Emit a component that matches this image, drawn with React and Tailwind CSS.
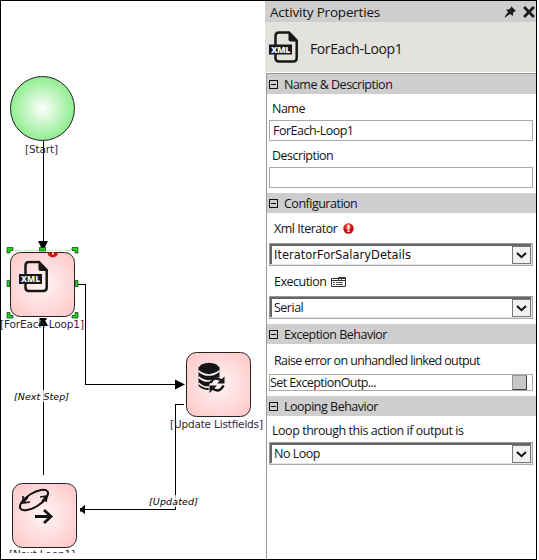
function XmlIcon({ className }) {
  return (
    <svg className={className} viewBox="0 0 30 33">
      <path d="M10 1.500H20L27.700 9.500V27Q27.700 30.500 24.200 30.500H10Q6.500 30.500 6.500 27V5Q6.500 1.500 10 1.500Z" fill="none" stroke="#171717" strokeWidth="2.500" />
      <path d="M19.500 1L28.500 10.500H21.500Q19.500 10.500 19.500 8.500Z" fill="#171717" />
      <rect x="0" y="13.500" width="23" height="10" fill="#171717" />
      <text x="11.500" y="21.800" textAnchor="middle" textLength="19" lengthAdjust="spacingAndGlyphs" fontFamily="Open Sans, sans-serif" fontWeight="800" fontSize="9.500" fill="#f4f4f4">XML</text>
    </svg>
  );
}

function ErrorBadge({ className }) {
  return (
    <svg className={className} viewBox="0 0 11 11">
      <circle cx="5.500" cy="5.500" r="5.200" fill="#c80d0d" />
      <circle cx="5" cy="4" r="3.200" fill="#ee4636" />
      <path d="M4.500 1.800h2v4.400h-2zM4.500 7.200h2v1.800h-2z" fill="#fff" />
    </svg>
  );
}

function Label({ x, y, w, italic, children, size = 10.5 }) {
  return (
    <text x={x} y={y} textLength={w} fontFamily="DejaVu Sans, sans-serif" fontSize={size} fontStyle={italic ? "italic" : "normal"} fill={italic ? "#000" : "#33263b"}>
      {children}
    </text>
  );
}

function Diagram() {
  return (
    <svg className="block h-[558px] w-[264px] shrink-0" viewBox="1 1 264 558">
      <defs>
        <radialGradient id="green">
          <stop offset="0" stopColor="#fff" />
          <stop offset=".3" stopColor="#dcf9dc" />
          <stop offset="1" stopColor="#90ee90" />
        </radialGradient>
        <radialGradient id="pink" r=".65">
          <stop offset="0" stopColor="#fff5f6" />
          <stop offset="1" stopColor="#ffc8c8" />
        </radialGradient>
        <clipPath id="lowerLabel"><rect x="5" y="550" width="80" height="3" /></clipPath>
      </defs>
      <circle cx="42.500" cy="108.500" r="32" fill="url(#green)" stroke="#222" />
      <g fill="none" stroke="#000" shapeRendering="crispEdges">
        <path d="M43.500 141V243M43.500 325V475" />
        <path d="M78 284.500H85.500V384.500H177" />
        <path d="M184 404.500H175.500V509.500H84" />
      </g>
      <path d="M38 241H48L44.500 248H41.500Z" />
      <g fill="url(#pink)" stroke="#222">
        <rect x="10.500" y="252.500" width="64" height="64" rx="10" />
        <rect x="186.500" y="352.500" width="64" height="64" rx="10" />
        <rect x="12.500" y="483.500" width="64" height="64" rx="10" />
      </g>
      <path d="M15 250.500H71" stroke="#b5f5b5" strokeDasharray="8 2" />
      <g fill="#1fd01f" stroke="#1c331c" strokeWidth=".7">
        <path d="M7 247.500H13V250.500H10V253H7ZM78 247.500H72V250.500H75V253H78ZM7 318H13V315.500H10V312.500H7ZM78 318H72V315.500H75V312.500H78Z" />
        <path d="M7 280.500H9.500V286.500H7ZM75.500 280.500H78V286.500H75.500ZM39.500 247.500H45.500V251H39.500Z" />
      </g>
      <path d="M47.500 252.500H58A5.200 4.800 0 0 1 47.500 252.500Z" fill="#d91010" />
      <path d="M52 252.500h1.800v2h-1.800z" fill="#fff" />
      <svg x="19" y="260.500" width="30" height="33"><XmlIcon /></svg>
      <path d="M38 326L41 320H39.500V318H46.500V320H45L48 326Z" />
      <path d="M175 379.500L185 384.500L175 389.500Z" />
      <path d="M80 508H81.500L85 504.500V514L81.500 511.500H80Z" />

      <g transform="translate(198.500 362)">
        <path d="M0 5V24Q4 28 10 28L11 22Q16 18 21 15V5Z" fill="#151515" />
        <path d="M0 9Q10 17 21 9M0 15Q7 21 14 18M0 21Q5 26 11 25" stroke="#fff0f1" strokeWidth="1.700" fill="none" />
        <ellipse cx="10.500" cy="6" rx="10" ry="5.200" fill="#151515" />
        <circle cx="18.500" cy="22.500" r="7" fill="#ffeff0" />
        <g fill="none" stroke="#151515" strokeWidth="2.500">
          <path d="M12 21Q15 13.500 23 18.500M25 23.500Q21 31.500 14 26.500" />
        </g>
        <path d="M26 14.500V21.500H18.500ZM11 31V23.500H18.500Z" fill="#151515" />
      </g>
      <g fill="none" stroke="#111">
        <ellipse cx="34" cy="500" rx="16" ry="6.800" transform="rotate(-32 34 500)" strokeWidth="2" />
        <path d="M23 496V503L30 502M24 502L28 497M40 497L47 496L46 502M46 497L42 501" strokeWidth="1.600" />
        <path d="M35 516.500H51M44 510L51 516.500L44 523" strokeWidth="2.800" />
      </g>
      <rect x="42" y="390" width="3" height="12" fill="#fff" fillOpacity=".8" />
      <rect x="174" y="495" width="3" height="12" fill="#fff" fillOpacity=".8" />
      <Label x={25} y={153} w={33}>[Start]</Label>
      <Label x={0} y={328} w={84}>[ForEach-Loop1]</Label>
      <Label x={170} y={428} w={93}>[Update Listfields]</Label>
      <Label x={14} y={400} w={55} size={9.500} italic>[Next Step]</Label>
      <Label x={149} y={505} w={49} size={9.500} italic>[Updated]</Label>
      <g clipPath="url(#lowerLabel)"><Label x={9} y={558} w={66}>[Next Loop1]</Label></g>
    </svg>
  );
}

function SectionHeader({ children, className }) {
  return (
    <div className={`flex shrink-0 items-center bg-[#cecece] pl-[2px] ${className}`}>
      <span className="flex h-[9px] w-[9px] items-center justify-center border border-[#111]">
        <span className="h-px w-[5px] bg-[#111]" />
      </span>
      <span className="ml-[6px] pt-[2px]">{children}</span>
    </div>
  );
}

function Select({ children, className = "" }) {
  return (
    <div className="ml-[2px] flex h-[23px] w-[264px] shrink-0 border border-r-[#aaa] border-b-[#aaa] border-t-[#999] border-l-[#999] bg-[#e4e4e4] pr-px pb-px">
      <div className="flex flex-1 items-center border-t-2 border-l-2 border-[#666] bg-white pl-[2px]">
        <span className={`flex-1 ${className}`}>{children}</span>
        <span className="flex h-[18px] w-[19px] items-center justify-center border border-[#777] bg-[#f1f1f4]">
          <svg className="h-[7px] w-[11px]" viewBox="0 0 11 7"><path d="M1 1L5.500 5.200L10 1" fill="none" stroke="#111" strokeWidth="2" /></svg>
        </span>
      </div>
    </div>
  );
}

function Properties() {
  return (
    <div className="flex h-[558px] w-[271px] flex-col font-['Open_Sans','Noto_Sans',sans-serif] text-[12.500px] leading-[18px] tracking-[-0.5px] text-[#151515]">
      <div className="flex h-[21px] shrink-0 items-center bg-[#cecece] pl-[5px]">
        <span className="flex-1 text-[13.500px] tracking-[-0.2px]">Activity Properties</span>
        <svg className="h-[12px] w-[12px]" viewBox="0 0 12 12">
          <path d="M7 0L12 5L10.500 5.500L9 7V10L6 8L1 11.500L0.500 11L4 6L2 3.500H5L7 1.500Z" fill="#1c1c1c" />
        </svg>
        <svg className="ml-[7px] mr-[1px] h-[12px] w-[12px]" viewBox="0 0 11 11"><path d="M1 1L10 10M10 1L1 10" stroke="#1c1c1c" strokeWidth="2.600" /></svg>
      </div>
      <div className="flex h-[50px] shrink-0 items-center bg-[#e4e2de] pl-[4px]">
        <XmlIcon className="h-[33px] w-[30px]" />
        <span className="ml-[11px] pt-[3px] text-[14px] tracking-[-0.4px]">ForEach-Loop1</span>
      </div>
      <div className="mt-px ml-px flex flex-1 flex-col border-l border-[#999]">
        <SectionHeader className="h-[21px] border-t border-[#999]">Name &amp; Description</SectionHeader>
        <div className="flex h-[26px] shrink-0 items-center pt-[3px] pl-[5px]">Name</div>
        <div className="ml-[2px] flex h-[21px] w-[264px] shrink-0 items-center border border-[#aaa] pl-[3px]">ForEach-Loop1</div>
        <div className="flex h-[26px] shrink-0 items-center pt-[3px] pl-[5px]">Description</div>
        <div className="ml-[2px] h-[21px] w-[264px] shrink-0 border border-[#aaa]" />
        <SectionHeader className="mt-[5px] h-[20px]">Configuration</SectionHeader>
        <div className="flex h-[30px] shrink-0 items-center pt-px pl-[7px]">
          <span className="pt-px">Xml Iterator</span>
          <ErrorBadge className="ml-[6px] h-[11px] w-[11px]" />
        </div>
        <Select className="font-['DejaVu_Sans',sans-serif] text-[11.500px] tracking-[0px]">IteratorForSalaryDetails</Select>
        <div className="flex h-[30px] shrink-0 items-center pt-[2px] pl-[7px]">
          <span>Execution</span>
          <svg className="ml-[5px] h-[10px] w-[15px]" viewBox="0 0 15 10">
            <path d="M.5 1.500H14.500V9.500H.5ZM1 3.500H14M7.500 .5H14.500V3.500H7.500Z" fill="#fff" stroke="#333" />
            <path d="M2 5.500H4M5 5.500H12M2 7.500H4M5 7.500H12M10.500 .5V3" stroke="#555" />
          </svg>
        </div>
        <Select>Serial</Select>
        <SectionHeader className="mt-[5px] h-[20px]">Exception Behavior</SectionHeader>
        <div className="flex h-[30px] shrink-0 items-center pt-[3px] pl-[7px] tracking-[-0.63px]">Raise error on unhandled linked output</div>
        <div className="ml-[2px] flex h-[17px] w-[264px] shrink-0 items-center border border-[#aaa]">
          <span className="flex-1 pt-px tracking-[-0.6px]">Set ExceptionOutp...</span>
          <span className="mr-[5px] h-[15px] w-[15px] border border-t-[#999] border-l-[#999] border-r-[#444] border-b-[#444] bg-[#c8c8c8]" />
        </div>
        <SectionHeader className="mt-[5px] h-[20px]">Looping Behavior</SectionHeader>
        <div className="flex h-[26px] shrink-0 items-center pt-[3px] pl-[5px] tracking-[-0.46px]">Loop through this action if output is</div>
        <Select>No Loop</Select>
      </div>
    </div>
  );
}

export default function App() {
  return (
    <main className="h-[560px] w-[539px] overflow-hidden bg-white">
      <div className="flex h-[560px] w-[537px] border border-black">
        <Diagram />
        <Properties />
      </div>
    </main>
  );
}
